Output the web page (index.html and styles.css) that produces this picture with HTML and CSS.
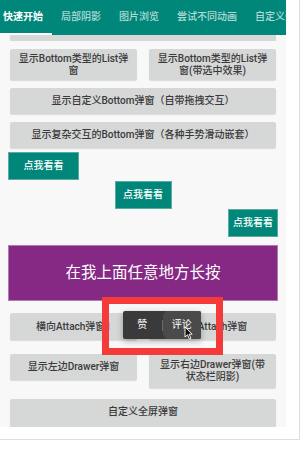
FILE: index.html
```html
<!DOCTYPE html>
<html lang="zh">

<head>
    <meta charset="UTF-8">
    <meta name="viewport" content="width=device-width, initial-scale=1.0">
    <title>快速开始</title>
    <link rel="stylesheet" href="styles.css">
</head>

<body>
    <div class="frame">
        <div class="screen">
            <div class="toolbar">
                <div class="tabs">
                    <span class="tab active">快速开始</span>
                    <span class="tab">局部阴影</span>
                    <span class="tab">图片浏览</span>
                    <span class="tab">尝试不同动画</span>
                    <span class="tab">自定义弹窗</span>
                </div>
            </div>

            <div class="content">
                <div class="peek">
                    <div class="btn full">显示中间弹窗</div>
                </div>

                <div class="row gap-8">
                    <div class="btn two">显示Bottom类型的List弹<br>窗</div>
                    <div class="btn two">显示Bottom类型的List弹<br>窗(带选中效果)</div>
                </div>

                <div class="btn full gap-8">显示自定义Bottom弹窗（自带拖拽交互）</div>
                <div class="btn full gap-8">显示复杂交互的Bottom弹窗（各种手势滑动嵌套）</div>

                <div class="teal first">点我看看</div>
                <div class="teal second">点我看看</div>
                <div class="teal third">点我看看</div>

                <div class="press">在我上面任意地方长按</div>

                <div class="row attach-row">
                    <div class="btn">横向Attach弹窗1</div>
                    <div class="btn">竖向Attach弹窗</div>
                </div>

                <div class="row drawer-row">
                    <div class="btn">显示左边Drawer弹窗</div>
                    <div class="btn two">显示右边Drawer弹窗(带<br>状态栏阴影)</div>
                </div>

                <div class="btn full fullscreen">自定义全屏弹窗</div>
            </div>

            <!-- attach popup shown over the list -->
            <div class="attach-popup">
                <span class="pop-item">赞</span>
                <span class="pop-divider"></span>
                <span class="pop-item pressed">评论</span>
            </div>
            <div class="highlight"></div>
            <svg class="cursor" width="9" height="14" viewBox="0 0 9 14">
                <path d="M1 1 L1 11 L3.5 8.8 L5.3 13 L6.9 12.3 L5.1 8.2 L8.2 8.2 Z" fill="#111" stroke="#fff" stroke-width="0.9" />
            </svg>
        </div>
    </div>
</body>

</html>
```

FILE: styles.css
```css
* {
    margin: 0;
    padding: 0;
    box-sizing: border-box;
}

body {
    font-family: Roboto, "Noto Sans CJK SC", sans-serif;
    background-color: #fff;
}

.frame {
    box-sizing: content-box;
    width: 299px;
    height: 439px;
    border-right: 1px solid #dedede;
    border-bottom: 1px solid #dedede;
}

.screen {
    position: relative;
    width: 286px;
    height: 427px;
    background-color: #f8f8f8;
    overflow: hidden;
}

/* Tab toolbar */
.toolbar {
    height: 35px;
    background-color: #00877a;
    overflow: hidden;
}

.tabs {
    display: flex;
    margin-left: -6px;
    white-space: nowrap;
}

.tab {
    padding: 0 9px;
    height: 35px;
    line-height: 34px;
    font-size: 10px;
    font-weight: 500;
    color: rgba(255, 255, 255, 0.7);
}

.tab.active {
    color: #fff;
    font-weight: bold;
    box-shadow: inset 0 -2px 0 #fff;
}

/* List */
.content {
    display: flex;
    flex-direction: column;
    padding: 0 8px;
}

.peek {
    height: 6px;
    overflow: hidden;
    display: flex;
    flex-direction: column;
    justify-content: flex-end;
}

.row {
    display: flex;
    gap: 12px;
    align-items: flex-start;
    margin-left: 2px;
    margin-right: 2px;
}

.row .btn {
    flex: 1;
    margin-left: 0;
    margin-right: 0;
}

.btn {
    flex-shrink: 0;
    margin-left: 2px;
    margin-right: 2px;
    height: 26px;
    line-height: 26px;
    background-color: #d6d7d7;
    border-radius: 2px;
    box-shadow: 0 1px 1px rgba(0, 0, 0, 0.12);
    color: #3a3a3a;
    font-size: 10px;
    font-weight: 500;
    text-align: center;
    white-space: nowrap;
}

.gap-8 {
    margin-top: 8px;
}

.btn.two {
    height: 31px;
    line-height: 11.5px;
    padding-top: 4px;
}

.drawer-row .btn.two {
    height: 34px;
    padding-top: 5px;
}

.attach-row {
    margin-top: 12px;
}

.attach-row .btn {
    height: 27px;
    line-height: 27px;
}

.drawer-row {
    margin-top: 14px;
}

.fullscreen {
    margin-top: 11px;
    height: 30px;
}

.teal {
    height: 28px;
    line-height: 26px;
    background-color: #00877a;
    border: 1px solid #5aaba2;
    color: #fff;
    font-size: 10px;
    font-weight: 500;
    text-align: center;
}

.teal.first {
    width: 71px;
    margin-top: 4px;
    align-self: flex-start;
}

.teal.second {
    width: 57px;
    margin-top: 1px;
    align-self: center;
}

.teal.third {
    width: 50px;
    align-self: flex-end;
}

.press {
    margin-top: 8px;
    height: 56px;
    line-height: 54px;
    background-color: #852985;
    border: 1px solid #b27ab2;
    color: #fff;
    font-size: 15.5px;
    text-align: center;
}

/* Attach popup + marker */
.attach-popup {
    position: absolute;
    left: 123px;
    top: 311px;
    width: 78px;
    height: 28px;
    display: flex;
    align-items: center;
    background-color: #3a3a3a;
    border-radius: 2px;
    box-shadow: 0 2px 6px rgba(0, 0, 0, 0.3);
    overflow: hidden;
}

.pop-item {
    flex: 1;
    text-align: center;
    color: #fff;
    font-size: 10px;
    line-height: 28px;
}

.pop-item.pressed {
    background: radial-gradient(circle at 60% 50%, #4a4a4a 0, #4a4a4a 24px, #3a3a3a 25px);
}

.pop-divider {
    width: 1px;
    height: 11px;
    background-color: #6a6a6a;
}

.highlight {
    position: absolute;
    left: 102px;
    top: 297px;
    width: 121px;
    height: 58px;
    border: 7px solid #f53a3a;
}

.cursor {
    position: absolute;
    left: 184px;
    top: 326px;
}
```
